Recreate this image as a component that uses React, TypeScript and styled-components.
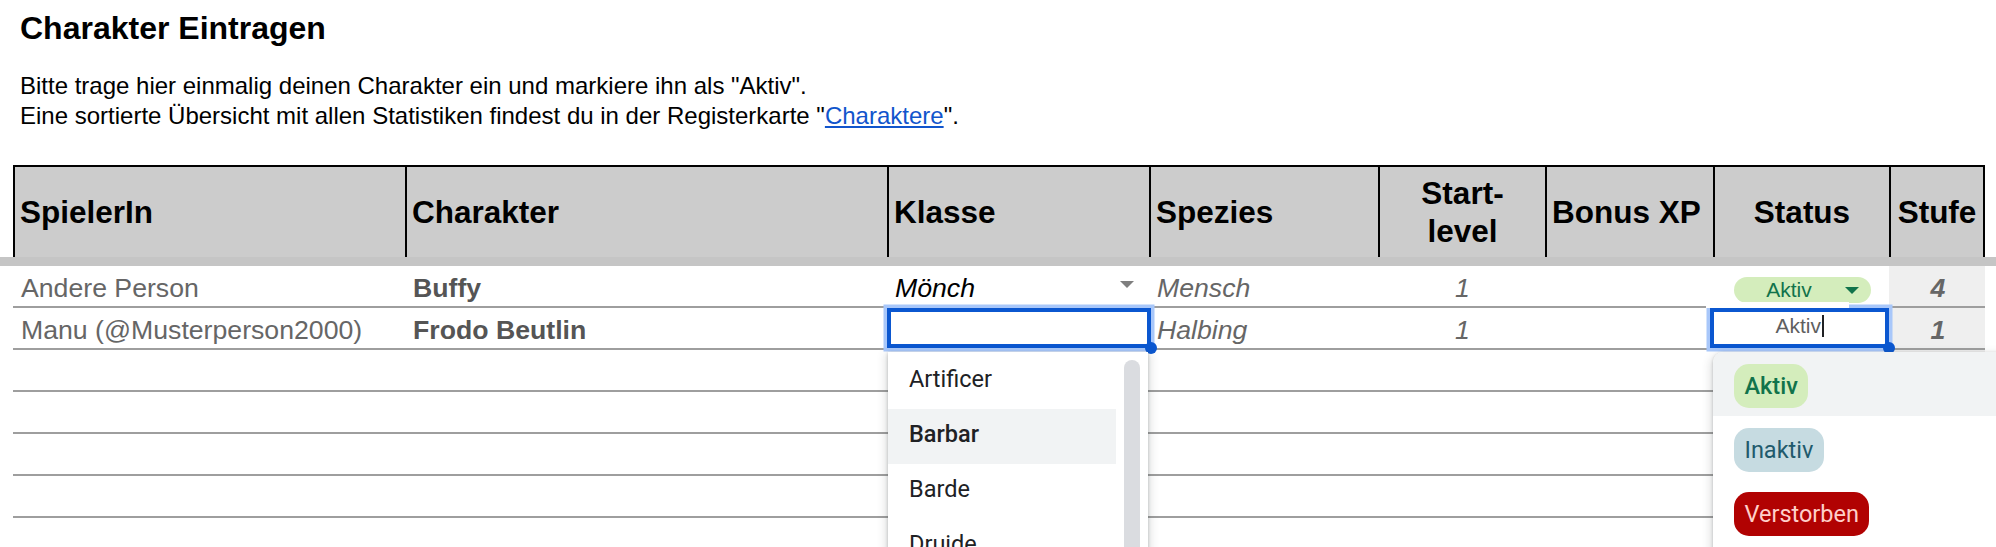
import React from "react";
import styled, { createGlobalStyle, css } from "styled-components";

const GlobalStyle = createGlobalStyle`
  html, body { margin: 0; padding: 0; background: #ffffff; }
  body {
    width: 1996px;
    height: 547px;
    overflow: hidden;
    font-family: "Liberation Sans", Arial, sans-serif;
    color: #000;
  }
  * { box-sizing: border-box; }
`;

const COLS = "392px 482px 262px 229px 167px 168px 176px 96px";

const Page = styled.div`
  position: relative;
  width: 1996px;
  height: 547px;
  overflow: hidden;
`;

const Intro = styled.header`
  padding: 8px 0 0 20px;
`;

const Title = styled.h1`
  margin: 0;
  font-size: 32px;
  line-height: 40px;
  font-weight: 700;
`;

const Description = styled.div`
  margin-top: 23px;
  font-size: 24px;
  line-height: 30px;
`;

const DescLine = styled.p`
  margin: 0;
  white-space: nowrap;
`;

const SheetLink = styled.a`
  color: #1155cc;
  text-decoration: underline;
`;

const Sheet = styled.section`
  margin-top: 34px;
`;

const HeaderRow = styled.div`
  display: grid;
  grid-template-columns: ${COLS};
  margin-left: 13px;
  width: 1972px;
  height: 92px;
  border-top: 2px solid #000;
  background: #cccccc;
`;

const HeaderCell = styled.div<{ $center?: boolean }>`
  display: flex;
  align-items: center;
  justify-content: ${(p) => (p.$center ? "center" : "flex-start")};
  text-align: ${(p) => (p.$center ? "center" : "left")};
  padding: 0 5px;
  border-left: 2px solid #000;
  font-size: 31.5px;
  line-height: 38px;
  font-weight: 700;
  white-space: nowrap;
  &:last-child {
    border-right: 2px solid #000;
  }
`;

const FreezeBand = styled.div`
  width: 1996px;
  height: 9px;
  background: #c5c5c5;
`;

const Row = styled.div`
  display: grid;
  grid-template-columns: ${COLS};
  margin-left: 13px;
  width: 1972px;
  height: 42px;
  border-bottom: 2px solid #9e9e9e;
`;

type Kind =
  | "player"
  | "char"
  | "klasse"
  | "spezies"
  | "level"
  | "bonus"
  | "status"
  | "stufe";

const kindStyles: Record<Kind, ReturnType<typeof css>> = {
  player: css`
    color: #666666;
  `,
  char: css`
    color: #555555;
    font-weight: 700;
  `,
  klasse: css`
    color: #000;
    font-style: italic;
    justify-content: space-between;
  `,
  spezies: css`
    color: #666666;
    font-style: italic;
  `,
  level: css`
    color: #666666;
    font-style: italic;
    justify-content: center;
  `,
  bonus: css``,
  status: css`
    justify-content: center;
  `,
  stufe: css`
    background: #efefef;
    color: #666666;
    font-weight: 700;
    font-style: italic;
    justify-content: center;
  `,
};

const Cell = styled.div<{ $kind: Kind }>`
  position: relative;
  display: flex;
  align-items: flex-end;
  padding: 0 6px 3px 8px;
  font-size: 26.67px;
  line-height: 30px;
  white-space: nowrap;
  ${(p) => kindStyles[p.$kind]}
`;

const DropArrow = styled.span<{ $color: string }>`
  align-self: center;
  width: 0;
  height: 0;
  border-left: 7px solid transparent;
  border-right: 7px solid transparent;
  border-top: 7px solid ${(p) => p.$color};
  margin-right: 9px;
  flex: none;
`;

const StatusPill = styled.div`
  display: flex;
  align-items: center;
  width: 137px;
  height: 26px;
  border-radius: 13px;
  background: #d4edbc;
  color: #11734b;
  font-size: 21px;
  line-height: 26px;
  font-style: normal;
  font-weight: 400;
`;

const PillLabel = styled.span`
  flex: 1;
  text-align: center;
`;

const PillArrow = styled(DropArrow)`
  margin-right: 12px;
`;

const Editor = styled.div<{ $left: number; $right: number; $maskTop?: number }>`
  position: absolute;
  top: 0;
  bottom: 0;
  left: ${(p) => p.$left}px;
  right: ${(p) => p.$right}px;
  z-index: 5;
  display: flex;
  align-items: center;
  justify-content: center;
  padding-bottom: 4px;
  background: #fff;
  border: 4px solid #0b57d0;
  box-shadow: 0 0 0 3.5px #a8c7fa;
  color: #5f5f5f;
  font-size: 21px;
  line-height: 24px;
  font-style: normal;
  font-weight: 400;
  ${(p) =>
    p.$maskTop
      ? css`
          &::before {
            content: "";
            position: absolute;
            left: -8px;
            top: -10px;
            width: ${p.$maskTop}px;
            height: 6px;
            background: #fff;
          }
        `
      : ""}
`;

const Caret = styled.span`
  display: inline-block;
  width: 1.5px;
  height: 22px;
  margin-left: 1px;
  background: #202124;
`;

const FillHandle = styled.span`
  position: absolute;
  right: -10px;
  bottom: -10px;
  width: 12px;
  height: 12px;
  border-radius: 50%;
  background: #0b57d0;
`;

const menuShadow = css`
  background: #fff;
  box-shadow: 0 1px 3px rgba(60, 64, 67, 0.3), 0 4px 8px 3px rgba(60, 64, 67, 0.15);
  z-index: 20;
`;

const ClassMenu = styled.div`
  position: absolute;
  left: 888px;
  top: 352px;
  width: 260px;
  height: 230px;
  padding-top: 2px;
  ${menuShadow}
`;

const ClassOption = styled.div<{ $active?: boolean }>`
  display: flex;
  align-items: center;
  width: 228px;
  height: 55px;
  padding: 0 0 5px 21px;
  font-family: Roboto, "Liberation Sans", sans-serif;
  font-size: 23.5px;
  font-weight: ${(p) => (p.$active ? 500 : 400)};
  color: #202124;
  background: ${(p) => (p.$active ? "#f1f3f4" : "transparent")};
`;

const ScrollThumb = styled.div`
  position: absolute;
  left: 236px;
  top: 8px;
  width: 16px;
  height: 260px;
  border-radius: 8px;
  background: #dadce0;
`;

const StatusMenu = styled.div`
  position: absolute;
  left: 1713px;
  top: 352px;
  width: 330px;
  height: 230px;
  border-radius: 10px;
  overflow: hidden;
  ${menuShadow}
`;

const StatusOption = styled.div<{ $active?: boolean }>`
  display: flex;
  align-items: center;
  height: 64px;
  padding: 3px 0 0 21px;
  background: ${(p) => (p.$active ? "#f1f3f4" : "transparent")};
`;

type Tone = "green" | "blue" | "red";
const toneColors: Record<Tone, { bg: string; fg: string }> = {
  green: { bg: "#d4edbc", fg: "#11734b" },
  blue: { bg: "#c6dbe1", fg: "#215a6c" },
  red: { bg: "#b10202", fg: "#ffcfc9" },
};

const Chip = styled.span<{ $tone: Tone; $strong?: boolean }>`
  display: inline-block;
  height: 44px;
  padding: 0 10.5px;
  border-radius: 15px;
  font-family: Roboto, "Liberation Sans", sans-serif;
  font-size: 23.5px;
  font-weight: ${(p) => (p.$strong ? 500 : 400)};
  line-height: 44px;
  background: ${(p) => toneColors[p.$tone].bg};
  color: ${(p) => toneColors[p.$tone].fg};
`;

const headers: { label: React.ReactNode; center?: boolean }[] = [
  { label: "SpielerIn" },
  { label: "Charakter" },
  { label: "Klasse" },
  { label: "Spezies" },
  {
    label: (
      <>
        Start-
        <br />
        level
      </>
    ),
    center: true,
  },
  { label: "Bonus XP" },
  { label: "Status", center: true },
  { label: "Stufe", center: true },
];

const classOptions = ["Artificer", "Barbar", "Barde", "Druide"];
const statusOptions: { label: string; tone: Tone }[] = [
  { label: "Aktiv", tone: "green" },
  { label: "Inaktiv", tone: "blue" },
  { label: "Verstorben", tone: "red" },
];

const EMPTY_ROWS = 5;

export default function App() {
  return (
    <Page>
      <GlobalStyle />
      <Intro>
        <Title>Charakter Eintragen</Title>
        <Description>
          <DescLine>
            Bitte trage hier einmalig deinen Charakter ein und markiere ihn als "Aktiv".
          </DescLine>
          <DescLine>
            Eine sortierte Übersicht mit allen Statistiken findest du in der Registerkarte "
            <SheetLink href="#">Charaktere</SheetLink>".
          </DescLine>
        </Description>
      </Intro>

      <Sheet>
        <HeaderRow>
          {headers.map((h, i) => (
            <HeaderCell key={i} $center={h.center}>
              <span>{h.label}</span>
            </HeaderCell>
          ))}
        </HeaderRow>
        <FreezeBand />

        <Row>
          <Cell $kind="player">Andere Person</Cell>
          <Cell $kind="char">Buffy</Cell>
          <Cell $kind="klasse">
            <span>Mönch</span>
            <DropArrow $color="#7f7f7f" />
          </Cell>
          <Cell $kind="spezies">Mensch</Cell>
          <Cell $kind="level">1</Cell>
          <Cell $kind="bonus" />
          <Cell $kind="status">
            <StatusPill>
              <PillLabel>Aktiv</PillLabel>
              <PillArrow $color="#11734b" />
            </StatusPill>
          </Cell>
          <Cell $kind="stufe">4</Cell>
        </Row>

        <Row>
          <Cell $kind="player">Manu (@Musterperson2000)</Cell>
          <Cell $kind="char">Frodo Beutlin</Cell>
          <Cell $kind="klasse">
            <Editor $left={0} $right={-2}>
              <FillHandle />
            </Editor>
          </Cell>
          <Cell $kind="spezies">Halbing</Cell>
          <Cell $kind="level">1</Cell>
          <Cell $kind="bonus" />
          <Cell $kind="status">
            <Editor $left={-3} $right={0} $maskTop={143}>
              <span>Aktiv</span>
              <Caret />
              <FillHandle />
            </Editor>
          </Cell>
          <Cell $kind="stufe">1</Cell>
        </Row>

        {Array.from({ length: EMPTY_ROWS }).map((_, r) => (
          <Row key={r}>
            <Cell $kind="player" />
            <Cell $kind="char" />
            <Cell $kind="klasse" />
            <Cell $kind="spezies" />
            <Cell $kind="level" />
            <Cell $kind="bonus" />
            <Cell $kind="status" />
            <Cell $kind="stufe" />
          </Row>
        ))}
      </Sheet>

      <ClassMenu>
        {classOptions.map((o) => (
          <ClassOption key={o} $active={o === "Barbar"}>
            {o}
          </ClassOption>
        ))}
        <ScrollThumb />
      </ClassMenu>

      <StatusMenu>
        {statusOptions.map((o, i) => (
          <StatusOption key={o.label} $active={i === 0}>
            <Chip $tone={o.tone} $strong={i === 0}>
              {o.label}
            </Chip>
          </StatusOption>
        ))}
      </StatusMenu>
    </Page>
  );
}
